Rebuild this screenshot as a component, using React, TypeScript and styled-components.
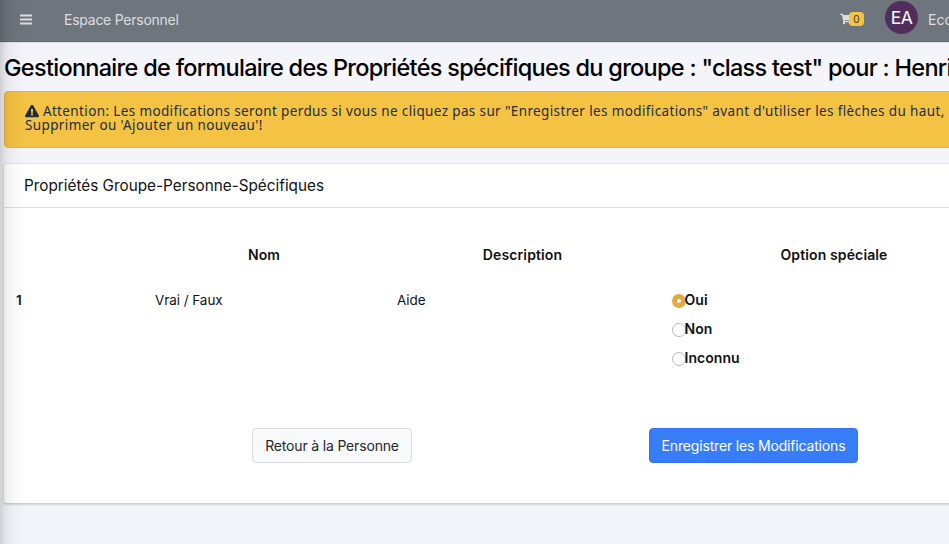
import React from 'react';
import styled, { createGlobalStyle, css } from 'styled-components';
import { FaShoppingCart, FaExclamationTriangle } from 'react-icons/fa';

const GlobalStyle = createGlobalStyle`
  *, *::before, *::after { box-sizing: border-box; }
  body {
    margin: 0;
    overflow: hidden;
    background: #f4f6f9;
    font-family: Inter, "Liberation Sans", sans-serif;
    color: #101214;
  }
`;

const Page = styled.div`
  height: 544px;
  overflow: hidden;
  background: #f4f5fa;
`;

const SidebarEdge = styled.div`
  position: fixed;
  top: -40px;
  bottom: -40px;
  left: -250px;
  width: 250px;
  box-shadow: 0 0 28px rgba(0, 0, 0, 0.16), 0 0 10px rgba(0, 0, 0, 0.16);
  pointer-events: none;
`;

const Navbar = styled.header`
  display: flex;
  align-items: center;
  width: 1008px;
  height: 42px;
  padding: 0 0 3px 20px;
  background: #6e757c;
  border-bottom: 1px solid #666c73;
  box-shadow: 0 1px 0 #dee2e6;
  color: #dcdee0;
  white-space: nowrap;
`;

const MenuButton = styled.a`
  display: flex;
  width: 44px;
`;

const NavLink = styled.a`
  font-size: 14px;
  letter-spacing: -0.25px;
`;

const CartLink = styled.a`
  display: flex;
  align-items: center;
  margin-left: auto;
  margin-right: 21px;
  font-size: 12px;
`;

const CartBadge = styled.span`
  margin-left: -3px;
  margin-top: -1px;
  width: 15px;
  height: 14px;
  border-radius: 4px;
  background: #f5c343;
  color: #3a3423;
  font-size: 10px;
  line-height: 14px;
  text-align: center;
`;

const Avatar = styled.span`
  width: 33px;
  height: 33px;
  margin: -4px 10px 0 0;
  border-radius: 50%;
  background: #512d5b;
  color: #fff;
  font-size: 17.5px;
  letter-spacing: -0.6px;
  line-height: 34px;
  text-align: center;
`;

const UserName = styled.span`
  width: 80px;
  font-size: 14px;
`;

const Content = styled.main`
  width: 1008px;
  padding-left: 4px;
`;

const Title = styled.h1`
  margin: 0;
  height: 49px;
  padding-top: 11px;
  font-size: 23.5px;
  font-weight: 500;
  line-height: 30px;
  letter-spacing: -0.71px;
  color: #000;
  white-space: nowrap;
`;

const Alert = styled.div`
  height: 57px;
  padding: 12px 20px;
  border: 1px solid #e3b546;
  border-radius: 4px;
  background: #f4c343;
  color: #1f2d3d;
  font-family: "Noto Sans", sans-serif;
  font-size: 13.5px;
  line-height: 14px;
  letter-spacing: 0.37px;
  white-space: nowrap;

  svg { font-size: 14px; vertical-align: -2px; }
`;

const Card = styled.section`
  height: 341px;
  margin: 15px 0 0 -1px;
  border: 1px solid #e3e4e7;
  border-bottom-color: #cfd0d5;
  border-radius: 4px;
  background: #fff;
  box-shadow: 0 1px 2px rgba(0, 0, 0, 0.14);
`;

const CardHeader = styled.h2`
  margin: 0;
  height: 44px;
  padding-left: 20px;
  border-bottom: 1px solid #dfdfe0;
  font-size: 15.3px;
  font-weight: 400;
  line-height: 43px;
`;

const columns = css`
  display: grid;
  grid-template-columns: 139px 242px 275px 348px;
`;

const HeadRow = styled.div`
  ${columns}
  padding-top: 37px;
  font-size: 14px;
  font-weight: 600;
  line-height: 20px;
  letter-spacing: 0.12px;
  text-align: center;
`;

const BodyRow = styled.div`
  ${columns}
  padding-top: 25px;
  font-size: 13.5px;
  line-height: 20px;
  letter-spacing: -0.06px;
`;

const Cell = styled.div<{ $strong?: boolean }>`
  padding-left: 12px;
  font-weight: ${(p) => (p.$strong ? 600 : 400)};
`;

const Option = styled.label`
  display: flex;
  align-items: center;
  height: 20px;
  margin-bottom: 9px;
  font-size: 14px;
  font-weight: 600;
  letter-spacing: 0.05px;
`;

const Radio = styled.input`
  appearance: none;
  flex: none;
  width: 14px;
  height: 14px;
  margin: 1px -1.5px 0 0;
  border: 1px solid #b9babd;
  border-radius: 50%;
  background: #fff;

  &:checked {
    border: 5px solid #e2a944;
  }
`;

const Actions = styled.div`
  display: flex;
  gap: 237px;
  padding: 51px 0 0 248px;
`;

const Button = styled.button<{ $primary?: boolean }>`
  width: ${(p) => (p.$primary ? 209 : 160)}px;
  height: 35px;
  padding: 0;
  border: 1px solid ${(p) => (p.$primary ? '#2f74ee' : '#dcdddf')};
  border-radius: 4px;
  background: ${(p) => (p.$primary ? '#377df7' : '#f8f9fa')};
  color: ${(p) => (p.$primary ? '#fff' : '#24282b')};
  font-family: inherit;
  font-size: 14px;
  letter-spacing: -0.17px;
  white-space: nowrap;
`;

const options = ['Oui', 'Non', 'Inconnu'];

function MenuIcon() {
  return (
    <svg width="12" height="12" viewBox="0 0 12 12" stroke="currentColor" strokeWidth="2">
      <path d="M0 2.4H12M0 6.5H12M0 10.6H12" />
    </svg>
  );
}

export default function App() {
  return (
    <Page>
      <GlobalStyle />
      <Navbar>
        <MenuButton><MenuIcon /></MenuButton>
        <NavLink>Espace Personnel</NavLink>
        <CartLink><FaShoppingCart /><CartBadge>0</CartBadge></CartLink>
        <Avatar>EA</Avatar>
        <UserName>Eco</UserName>
      </Navbar>
      <Content>
        <Title>Gestionnaire de formulaire des Propriétés spécifiques du groupe : "class test" pour : Henri</Title>
        <Alert>
          <FaExclamationTriangle /> Attention: Les modifications seront perdus si vous ne cliquez pas sur "Enregistrer les modifications" avant d'utiliser les flèches du haut,
          <br />
          Supprimer ou 'Ajouter un nouveau'!
        </Alert>
        <Card>
          <CardHeader>Propriétés Groupe-Personne-Spécifiques</CardHeader>
          <HeadRow>
            <span />
            <span>Nom</span>
            <span>Description</span>
            <span>Option spéciale</span>
          </HeadRow>
          <BodyRow>
            <Cell $strong>1</Cell>
            <Cell>Vrai / Faux</Cell>
            <Cell>Aide</Cell>
            <Cell>
              {options.map((label) => (
                <Option key={label}>
                  <Radio type="radio" name="option" defaultChecked={label === 'Oui'} />
                  {label}
                </Option>
              ))}
            </Cell>
          </BodyRow>
          <Actions>
            <Button>Retour à la Personne</Button>
            <Button $primary>Enregistrer les Modifications</Button>
          </Actions>
        </Card>
      </Content>
      <SidebarEdge />
    </Page>
  );
}
